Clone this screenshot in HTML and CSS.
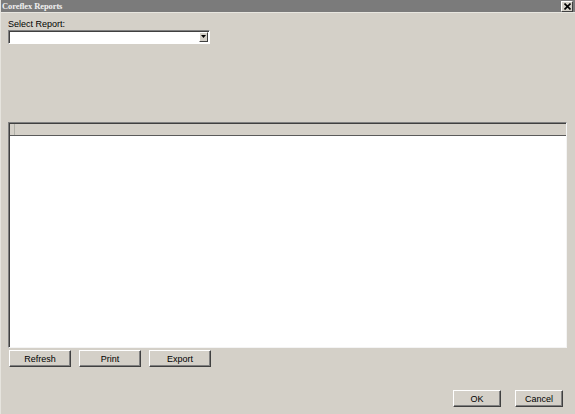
FILE: index.html
```html
<!DOCTYPE html>
<html>
<head>
<meta charset="utf-8">
<link rel="stylesheet" href="styles.css">
</head>
<body>
<div class="window">
  <div class="titlebar">
    <span class="title">Coreflex Reports</span>
    <span class="close"><svg width="7" height="7" viewBox="0 0 7 7"><path d="M0.5 0.5L6.5 6.5M6.5 0.5L0.5 6.5" stroke="#000" stroke-width="1.6"/></svg></span>
  </div>
  <div class="content">
    <div class="label">Select Report:</div>
    <div class="select">
      <div class="select-field"></div>
      <div class="select-btn"><svg width="5" height="4" viewBox="0 0 5 4"><path d="M0 0H5L2.5 3Z" fill="#000"/></svg></div>
    </div>
    <div class="table">
      <div class="thead"><div class="thcell"></div></div>
      <div class="tbody"></div>
    </div>
    <div class="actions">
      <button class="btn">Refresh</button>
      <button class="btn">Print</button>
      <button class="btn">Export</button>
    </div>
    <div class="footer">
      <button class="btn btn-sm">OK</button>
      <button class="btn btn-sm">Cancel</button>
    </div>
  </div>
</div>
</body>
</html>
```

FILE: styles.css
```css
html, body {
  margin: 0;
  padding: 0;
  background: #d4d0c8;
}
body {
  width: 575px;
  height: 414px;
  overflow: hidden;
  font-family: "Liberation Sans", Arial, sans-serif;
  font-size: 9px;
  color: #000;
}
.window {
  width: 575px;
  height: 414px;
  display: flex;
  flex-direction: column;
  box-sizing: border-box;
  border-left: 1px solid #e6e4de;
}
.titlebar {
  height: 12px;
  background: #7b7b7b;
  display: flex;
  align-items: center;
  justify-content: space-between;
  padding: 0 2px 0 1px;
  border-bottom: 1px solid #e8e6e0;
}
.title {
  font-family: "Liberation Serif", "Times New Roman", serif;
  font-weight: bold;
  font-size: 8.5px;
  color: #f0f0f0;
  letter-spacing: -0.1px;
}
.close {
  width: 10px;
  height: 9px;
  background: #d4d0c8;
  border: 1px solid;
  border-color: #fff #404040 #404040 #fff;
  display: flex;
  align-items: center;
  justify-content: center;
}
.content {
  flex: 1;
  display: flex;
  flex-direction: column;
  padding: 0 5px 0 7px;
}
.label {
  margin-top: 5px;
  height: 12px;
  line-height: 12px;
  font-size: 9px;
}
.select {
  width: 202px;
  height: 14px;
  display: flex;
  box-sizing: border-box;
  border: 1px solid;
  border-color: #808080 #fff #fff #808080;
  box-shadow: inset 1px 1px 0 #404040;
  background: #fff;
  padding: 1px 1px 1px 1px;
}
.select-field {
  flex: 1;
}
.select-btn {
  width: 9px;
  height: 10px;
  box-sizing: border-box;
  background: #d4d0c8;
  border: 1px solid;
  border-color: #fff #404040 #404040 #fff;
  display: flex;
  align-items: center;
  justify-content: center;
}
.table {
  margin-top: 78px;
  width: 559px;
  height: 226px;
  box-sizing: border-box;
  border: 1px solid;
  border-color: #808080 #f4f4f4 #f4f4f4 #808080;
  box-shadow: inset 1px 1px 0 #404040;
  display: flex;
  flex-direction: column;
  background: #fff;
  padding: 1px 0 0 1px;
}
.thead {
  height: 11px;
  background: #d4d0c8;
  border-bottom: 1px solid #5a5a5a;
  display: flex;
}
.thcell {
  width: 4px;
  border-right: 1px solid #b0b0a8;
}
.tbody {
  flex: 1;
  background: #fff;
}
.actions {
  margin-top: 2px;
  display: flex;
  gap: 8px;
  padding-left: 1px;
}
.btn {
  width: 62px;
  height: 17px;
  box-sizing: border-box;
  background: #d4d0c8;
  border: 1px solid;
  border-color: #fff #404040 #404040 #fff;
  box-shadow: inset -1px -1px 0 #808080;
  font-family: "Liberation Sans", Arial, sans-serif;
  font-size: 9px;
  color: #000;
  padding: 0;
  margin: 0;
}
.footer {
  margin-top: 23px;
  display: flex;
  justify-content: flex-end;
  gap: 14px;
  padding-right: 7px;
}
.btn-sm {
  width: 48px;
}
```
